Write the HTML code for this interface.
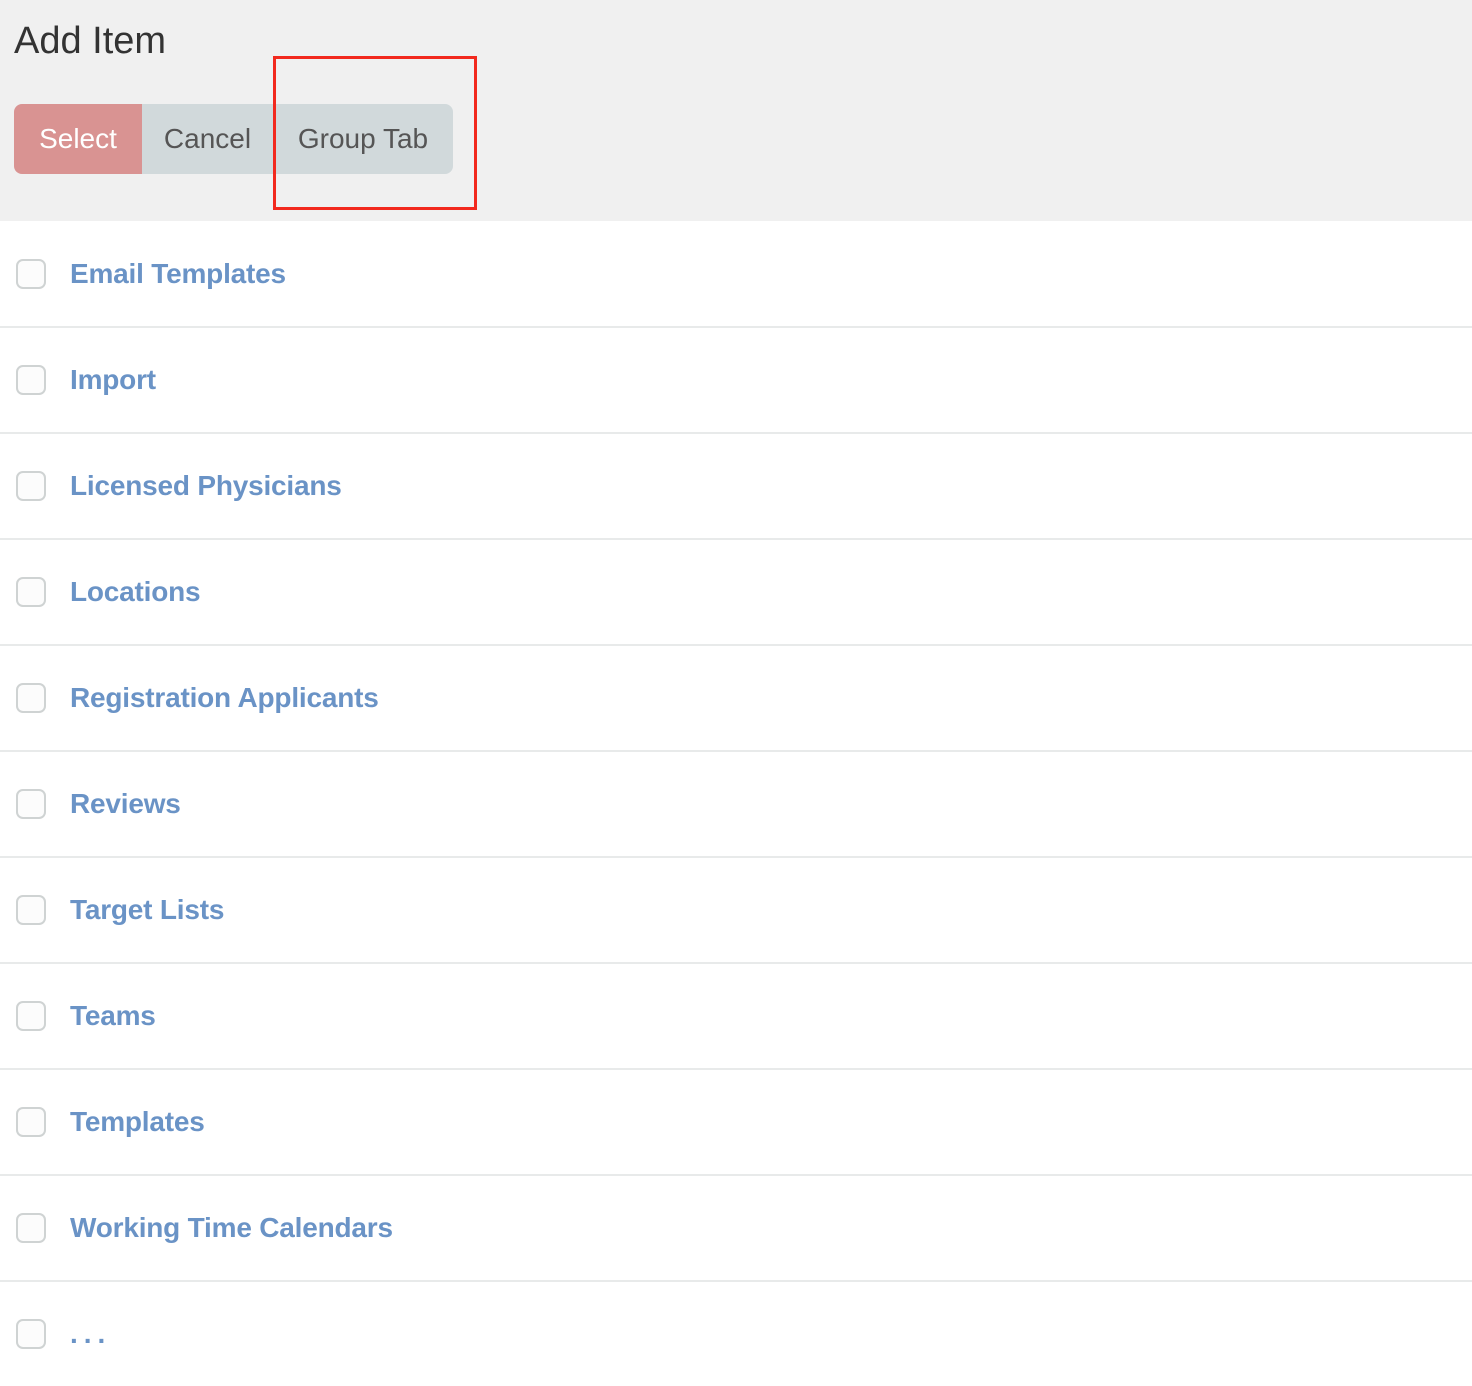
<!DOCTYPE html>
<html><head><style>
body{margin:0;width:1472px;height:1382px;background:#fff;font-family:"Liberation Sans",sans-serif;overflow:hidden;position:relative}
.hdr{position:absolute;left:0;top:0;width:1472px;height:221px;background:#f0f0f0}
h1{position:absolute;left:14px;top:19px;margin:0;font-weight:normal;font-size:38px;color:#333;line-height:44px}
.btns{position:absolute;left:14px;top:104px;height:70px;display:flex;border-radius:8px;overflow:hidden}
.btns div{height:70px;line-height:70px;font-size:28px;text-align:center}
.sel{width:128px;background:#d99392;color:#fff}
.can{width:131px;background:#d1d9db;color:#555}
.grp{width:180px;background:#d1d9db;color:#555}
.box{position:absolute;left:273px;top:56px;width:198px;height:148px;border:3px solid #f2291e}
.row{position:absolute;left:0;width:1472px;height:104px;border-bottom:2px solid #e8eaea}
.cb{position:absolute;left:16px;top:37px;width:26px;height:26px;border:2px solid #cfd3d3;border-radius:7px;background:#fcfcfc}
.t{position:absolute;left:70px;top:32px;font-size:28px;font-weight:bold;color:#6a93c6;line-height:40px;letter-spacing:-0.2px}
</style></head><body>
<div class="hdr"></div>
<h1>Add Item</h1>
<div class="btns"><div class="sel">Select</div><div class="can">Cancel</div><div class="grp">Group Tab</div></div>
<div class="box"></div>
<div class="row" style="top:222px"><div class="cb"></div><div class="t">Email Templates</div></div>
<div class="row" style="top:328px"><div class="cb"></div><div class="t">Import</div></div>
<div class="row" style="top:434px"><div class="cb"></div><div class="t">Licensed Physicians</div></div>
<div class="row" style="top:540px"><div class="cb"></div><div class="t">Locations</div></div>
<div class="row" style="top:646px"><div class="cb"></div><div class="t">Registration Applicants</div></div>
<div class="row" style="top:752px"><div class="cb"></div><div class="t">Reviews</div></div>
<div class="row" style="top:858px"><div class="cb"></div><div class="t">Target Lists</div></div>
<div class="row" style="top:964px"><div class="cb"></div><div class="t">Teams</div></div>
<div class="row" style="top:1070px"><div class="cb"></div><div class="t">Templates</div></div>
<div class="row" style="top:1176px"><div class="cb"></div><div class="t">Working Time Calendars</div></div>
<div class="row" style="top:1282px;border:none"><div class="cb"></div><div class="t" style="letter-spacing:6px">...</div></div>
</body></html>
